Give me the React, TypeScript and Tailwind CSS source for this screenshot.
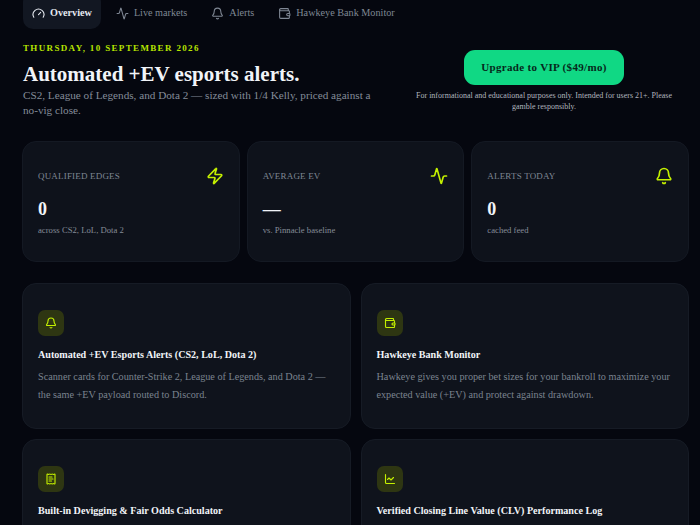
import React from 'react';
import { Gauge, Activity, Bell, Wallet, Zap, ReceiptText, ChartLine } from 'lucide-react';

const navItems = [
  { label: 'Overview', icon: Gauge, active: true },
  { label: 'Live markets', icon: Activity },
  { label: 'Alerts', icon: Bell },
  { label: 'Hawkeye Bank Monitor', icon: Wallet },
];

const stats = [
  { label: 'Qualified edges', value: '0', note: 'across CS2, LoL, Dota 2', icon: Zap },
  { label: 'Average EV', value: '—', note: 'vs. Pinnacle baseline', icon: Activity },
  { label: 'Alerts today', value: '0', note: 'cached feed', icon: Bell },
];

const features = [
  {
    title: 'Automated +EV Esports Alerts (CS2, LoL, Dota 2)',
    text: 'Scanner cards for Counter-Strike 2, League of Legends, and Dota 2 — the same +EV payload routed to Discord.',
    icon: Bell,
  },
  {
    title: 'Hawkeye Bank Monitor',
    text: 'Hawkeye gives you proper bet sizes for your bankroll to maximize your expected value (+EV) and protect against drawdown.',
    icon: Wallet,
  },
  {
    title: 'Built-in Devigging & Fair Odds Calculator',
    icon: ReceiptText,
  },
  {
    title: 'Verified Closing Line Value (CLV) Performance Log',
    icon: ChartLine,
  },
];

const App = () => {
  return (
    <div className="h-[525px] w-[700px] overflow-hidden bg-[#05070f] pl-[22px] pr-[11px] font-['Liberation_Serif',serif]">
      {/* Top nav, scrolled slightly past the top of the window */}
      <nav className="flex h-[29px] items-end gap-[6px] pl-px">
        {navItems.map((item) => {
          const Icon = item.icon;
          return (
            <div
              key={item.label}
              className={`flex h-[37px] shrink-0 items-center gap-[5px] rounded-[10px] px-[9px] pt-[5px] text-[10.2px] ${
                item.active ? 'bg-[#121722] font-bold text-[#e5e9f0]' : 'text-[#7f8794]'
              }`}
            >
              <Icon className="h-[13px] w-[13px]" strokeWidth={2} />
              {item.label}
            </div>
          );
        })}
      </nav>

      {/* Header */}
      <header className="mt-[13px] flex items-start justify-between pl-px">
        <div className="w-[355px]">
          <div className="text-[9px] font-bold uppercase leading-[12px] tracking-[0.15em] text-[#b6e300]">
            Thursday, 10 September 2026
          </div>
          <h1 className="mt-[6px] text-[21px] font-bold leading-[28px] text-[#f1f4f8]">
            Automated +EV esports alerts.
          </h1>
          <p className="text-[11.2px] leading-[15px] text-[#848c99]">
            CS2, League of Legends, and Dota 2 — sized with 1/4 Kelly, priced against a no-vig close.
          </p>
        </div>
        <div className="flex w-[290px] flex-col items-center px-[8px] pt-[8px]">
          <button className="h-[35px] w-[160px] rounded-[11px] bg-[#10d884] text-[11px] font-bold tracking-[0.03em] text-[#06281b]">
            Upgrade to VIP ($49/mo)
          </button>
          <p className="mt-[5px] text-center text-[8px] leading-[11px] text-[#b0b5be]">
            For informational and educational purposes only. Intended for users 21+. Please gamble responsibly.
          </p>
        </div>
      </header>

      {/* Stat cards */}
      <section className="mt-[23px] grid grid-cols-3 gap-[7px]">
        {stats.map((stat) => {
          const Icon = stat.icon;
          return (
            <div
              key={stat.label}
              className="flex h-[121px] flex-col rounded-[14px] border border-[#141923] bg-[#0e121b] px-[15px] pt-[25px]"
            >
              <div className="flex items-start justify-between">
                <span className="pt-[3px] text-[9px] uppercase tracking-[0.02em] text-[#7f8794]">{stat.label}</span>
                <Icon className="h-[18px] w-[18px] text-[#c4f000]" strokeWidth={2.25} />
              </div>
              <div className="mt-[13px] text-[18px] font-bold leading-[22px] text-[#f1f4f8]">{stat.value}</div>
              <div className="mt-[4px] text-[8.7px] leading-[12px] text-[#858c98]">{stat.note}</div>
            </div>
          );
        })}
      </section>

      {/* Feature cards */}
      <section className="mt-[21px] grid grid-cols-2 gap-[10px]">
        {features.map((feature) => {
          const Icon = feature.icon;
          return (
            <div
              key={feature.title}
              className="h-[146px] rounded-[14px] border border-[#161b25] bg-[#0f131c] px-[15px] pt-[26px]"
            >
              <div className="flex h-[26px] w-[26px] items-center justify-center rounded-[7px] bg-[#2e3612]">
                <Icon className="h-[12px] w-[12px] text-[#c4f000]" strokeWidth={2.25} />
              </div>
              <h3 className="mt-[12px] text-[10.1px] font-bold leading-[14px] text-[#f1f4f8]">{feature.title}</h3>
              {feature.text && (
                <p className="mt-[6px] text-[10.2px] leading-[17.5px] text-[#7b838f]">{feature.text}</p>
              )}
            </div>
          );
        })}
      </section>
    </div>
  );
};

export default App;
